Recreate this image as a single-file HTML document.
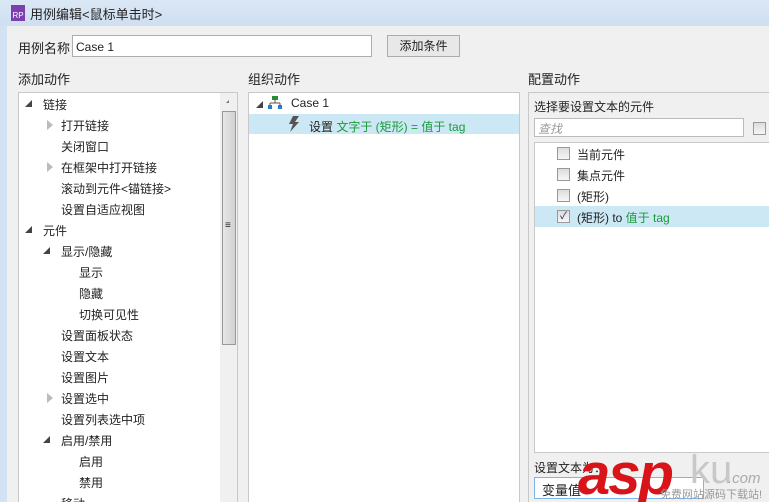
<!DOCTYPE html>
<html style="overflow:hidden;width:769px;height:502px"><head><meta charset="utf-8"><style>
*{margin:0;padding:0;box-sizing:border-box}
body{width:769px;height:502px;overflow:hidden;background:#f0f0f0;font:12px "Liberation Sans","Noto Sans CJK SC",sans-serif;color:#222;position:relative}
.a{position:absolute;white-space:nowrap}
.box{position:absolute;background:#fff;border:1px solid #c8c8c8}
.tri{position:absolute;width:0;height:0}
.dn{border-left:7px solid transparent;border-bottom:7px solid #444}
.rt{border-top:5px solid transparent;border-bottom:5px solid transparent;border-left:6px solid #bbb}
.cb{position:absolute;width:13px;height:13px;border:1px solid #999;background:linear-gradient(#ddd,#f6f6f6)}
.g{color:#1a9a3a}
</style></head><body>
<div class="a" style="left:0;top:0;width:769px;height:26px;background:linear-gradient(#dbe7f5,#cfdff0)"></div>
<div class="a" style="left:0;top:26px;width:7px;height:476px;background:#d3e2f2"></div>
<div class="a" style="left:11px;top:5px;width:14px;height:16px;background:#7b3fb0;color:#fff;font-size:8px;line-height:22px;text-align:center">RP</div>
<div class="a" style="left:30px;top:4px;font-size:13px">用例编辑&lt;鼠标单击时&gt;</div>
<div class="a" style="left:18px;top:38px;font-size:13px">用例名称</div>
<div class="box" style="left:72px;top:35px;width:300px;height:22px;border-color:#abadb3"></div>
<div class="a" style="left:76px;top:40px">Case 1</div>
<div class="a" style="left:387px;top:35px;width:73px;height:22px;border:1px solid #acacac;background:#e8e8e8;text-align:center;line-height:20px">添加条件</div>
<div class="a" style="left:18px;top:69px;font-size:13px">添加动作</div>
<div class="a" style="left:248px;top:69px;font-size:13px">组织动作</div>
<div class="a" style="left:528px;top:69px;font-size:13px">配置动作</div>

<div class="box" style="left:18px;top:92px;width:220px;height:420px"></div>
<div class="a" style="left:220px;top:93px;width:17px;height:409px;background:#f0f0f0"></div>
<div class="a" style="left:222px;top:111px;width:14px;height:234px;border:1px solid #999;background:linear-gradient(90deg,#e6e6e6,#d2d2d2)"></div>
<div class="a" style="left:225px;top:220px;font-size:10px">≡</div>
<div class="tri" style="left:226px;top:100px;border-left:3px solid transparent;border-bottom:3px solid #777"></div>

<div class="tri dn" style="left:25px;top:100px"></div><div class="a" style="left:43px;top:96px">链接</div>
<div class="tri rt" style="left:47px;top:120px"></div><div class="a" style="left:61px;top:117px">打开链接</div>
<div class="a" style="left:61px;top:138px">关闭窗口</div>
<div class="tri rt" style="left:47px;top:162px"></div><div class="a" style="left:61px;top:159px">在框架中打开链接</div>
<div class="a" style="left:61px;top:180px">滚动到元件&lt;锚链接&gt;</div>
<div class="a" style="left:61px;top:201px">设置自适应视图</div>
<div class="tri dn" style="left:25px;top:226px"></div><div class="a" style="left:43px;top:222px">元件</div>
<div class="tri dn" style="left:43px;top:247px"></div><div class="a" style="left:61px;top:243px">显示/隐藏</div>
<div class="a" style="left:79px;top:264px">显示</div>
<div class="a" style="left:79px;top:285px">隐藏</div>
<div class="a" style="left:79px;top:306px">切换可见性</div>
<div class="a" style="left:61px;top:327px">设置面板状态</div>
<div class="a" style="left:61px;top:348px">设置文本</div>
<div class="a" style="left:61px;top:369px">设置图片</div>
<div class="tri rt" style="left:47px;top:393px"></div><div class="a" style="left:61px;top:390px">设置选中</div>
<div class="a" style="left:61px;top:411px">设置列表选中项</div>
<div class="tri dn" style="left:43px;top:436px"></div><div class="a" style="left:61px;top:432px">启用/禁用</div>
<div class="a" style="left:79px;top:453px">启用</div>
<div class="a" style="left:79px;top:474px">禁用</div>
<div class="a" style="left:61px;top:495px">移动</div>

<div class="box" style="left:248px;top:92px;width:272px;height:420px"></div>
<div class="tri dn" style="left:256px;top:101px"></div>
<svg class="a" style="left:268px;top:96px" width="14" height="13"><rect x="4" y="0" width="6" height="4" fill="#2a8a3a"/><path d="M7 4v3M2 7h10M2 7v2M12 7v2" stroke="#555" fill="none"/><rect x="0" y="9" width="4" height="4" fill="#2a7ac8"/><rect x="10" y="9" width="4" height="4" fill="#2a7ac8"/></svg>
<div class="a" style="left:291px;top:96px">Case 1</div>
<div class="a" style="left:249px;top:114px;width:270px;height:20px;background:#cce8f4"></div>
<svg class="a" style="left:288px;top:116px" width="12" height="16"><path d="M5 0h6L7 6h4L2 16l3-8H1z" fill="#555"/></svg>
<div class="a" style="left:309px;top:118px">设置 <span class="g">文字于 (矩形) = 值于 tag</span></div>

<div class="box" style="left:528px;top:92px;width:250px;height:420px;background:#f0f0f0"></div>
<div class="a" style="left:534px;top:98px">选择要设置文本的元件</div>
<div class="box" style="left:534px;top:118px;width:210px;height:19px;border-color:#bbb"></div>
<div class="a" style="left:538px;top:120px;color:#999;font-style:italic">查找</div>
<div class="cb" style="left:753px;top:122px"></div>
<div class="box" style="left:534px;top:142px;width:240px;height:311px"></div>
<div class="cb" style="left:557px;top:147px"></div><div class="a" style="left:577px;top:146px">当前元件</div>
<div class="cb" style="left:557px;top:168px"></div><div class="a" style="left:577px;top:167px">集点元件</div>
<div class="cb" style="left:557px;top:189px"></div><div class="a" style="left:577px;top:188px">(矩形)</div>
<div class="a" style="left:535px;top:206px;width:234px;height:21px;background:#cce8f4"></div>
<div class="cb" style="left:557px;top:210px;font-size:10px;line-height:11px;text-align:center;color:#224">✓</div>
<div class="a" style="left:577px;top:209px">(矩形) to <span class="g">值于 tag</span></div>
<div class="a" style="left:534px;top:459px">设置文本为：</div>
<div class="box" style="left:534px;top:477px;width:170px;height:22px;border-color:#7eb4ea"></div>
<div class="a" style="left:542px;top:480px;font-size:13px">变量值</div>
<div class="a" style="left:578px;top:441px;font:italic bold 58px 'Liberation Sans',sans-serif;color:#d8141a;letter-spacing:-2px">asp</div>
<div class="a" style="left:690px;top:448px;font:40px 'Liberation Sans',sans-serif;color:#c8c8c8">ku</div>
<div class="a" style="left:728px;top:470px;font:italic 15px 'Liberation Sans',sans-serif;color:#aaa">.com</div>
<div class="a" style="left:660px;top:486px;font-size:11px;color:#999">免费网站源码下载站!</div>
</body></html>
